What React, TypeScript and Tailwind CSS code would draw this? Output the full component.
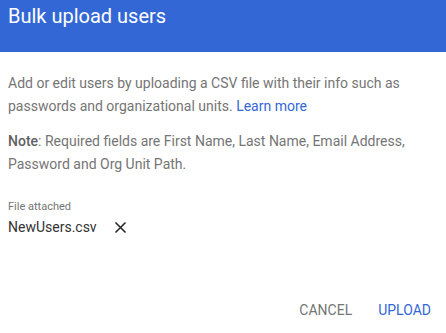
export default function App() {
  return (
    <div className="w-[446px] h-[333px] bg-white font-['Roboto',sans-serif] flex flex-col">
      <div className="h-[52px] bg-[#3367d6] px-2 pt-[3px]">
        <h1 className="text-[20px] leading-[26px] text-white">Bulk upload users</h1>
      </div>
      <div className="px-2 pt-[20px] text-[14px] leading-[23px] text-[#757575]">
        <p>
          Add or edit users by uploading a CSV file with their info such as passwords and organizational units.{" "}
          <a className="text-[#3367d6]">Learn more</a>
        </p>
        <p className="mt-[12px]">
          <span className="font-medium text-[#616161]">Note</span>: Required fields are First Name, Last Name, Email
          Address, Password and Org Unit Path.
        </p>
        <div className="mt-[24px] text-[11px] leading-[14px] text-[#757575]">File attached</div>
        <div className="mt-[3px] flex items-center gap-[17px] text-[14px] leading-[20px] text-[#333]">
          <span>NewUsers.csv</span>
          <svg width="13" height="13" viewBox="0 0 13 13" stroke="#212121" strokeWidth="1.5">
            <path d="M1.5 1.5L11.5 11.5M11.5 1.5L1.5 11.5" />
          </svg>
        </div>
      </div>
      <div className="mt-auto flex justify-end gap-[26px] px-[15px] pb-[15px] text-[14px] leading-[16px]">
        <button className="uppercase text-[#757575]">Cancel</button>
        <button className="uppercase text-[#3367d6]">Upload</button>
      </div>
    </div>
  );
}
